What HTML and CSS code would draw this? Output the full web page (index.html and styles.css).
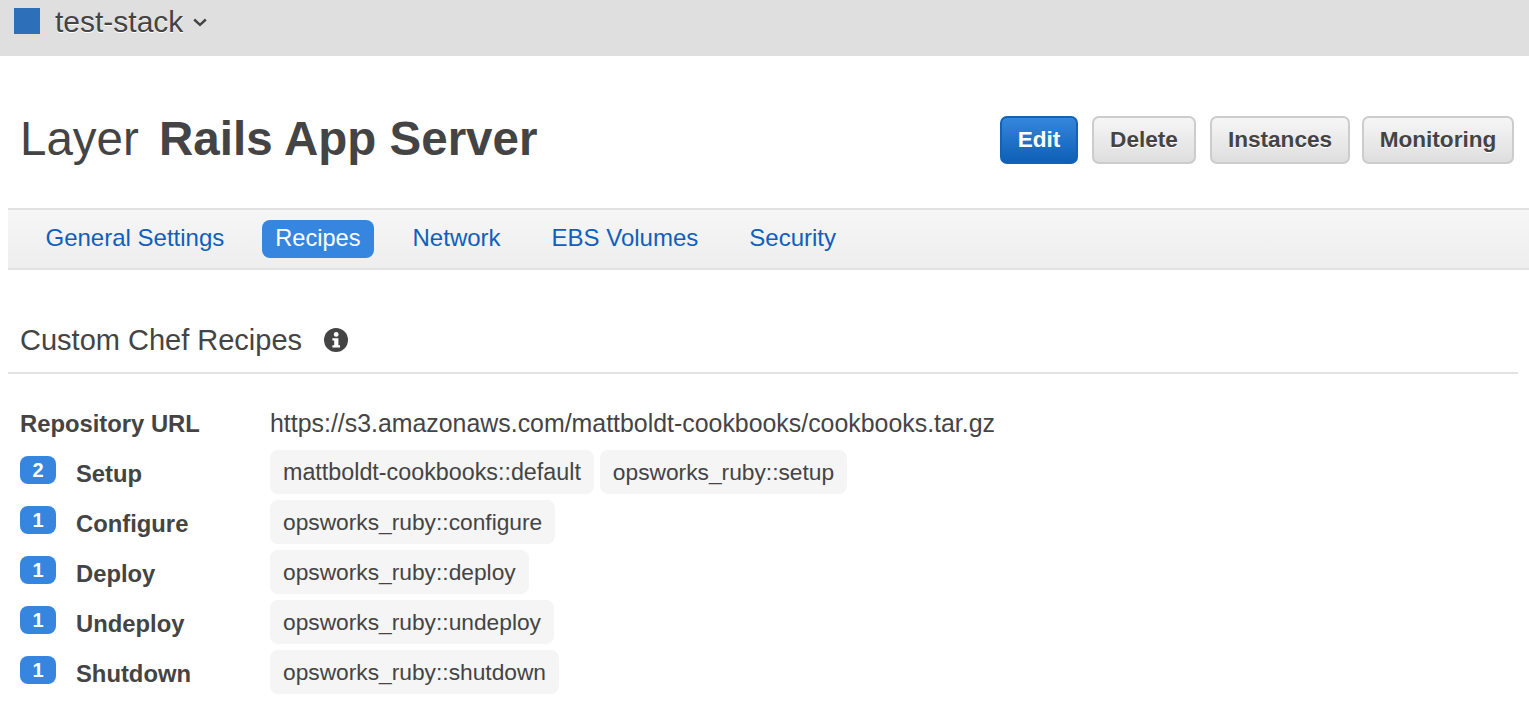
FILE: index.html
```html
<!DOCTYPE html>
<html lang="en">

<head>
    <meta charset="UTF-8">
    <meta name="viewport" content="width=device-width, initial-scale=1.0">
    <title>Layer Rails App Server</title>
    <link rel="stylesheet" href="styles.css">
</head>

<body>
    <div class="stack-bar">
        <span class="stack-color"></span>
        <span class="stack-name">test-stack</span>
        <svg class="stack-caret" width="14" height="9" viewBox="0 0 14 9">
            <path d="M1.2 1.5 L7 6.8 L12.8 1.5" fill="none" stroke="#444" stroke-width="2.4" />
        </svg>
    </div>

    <div class="page-header">
        <h1><span class="light">Layer</span> <strong>Rails App Server</strong></h1>
        <div class="actions">
            <button class="btn btn-primary btn-edit">Edit</button>
            <button class="btn btn-delete">Delete</button>
            <button class="btn btn-instances">Instances</button>
            <button class="btn btn-monitoring">Monitoring</button>
        </div>
    </div>

    <nav class="tabs">
        <a href="#">General Settings</a>
        <a href="#" class="active">Recipes</a>
        <a href="#">Network</a>
        <a href="#">EBS Volumes</a>
        <a href="#">Security</a>
    </nav>

    <div class="section-title">
        <h2>Custom Chef Recipes</h2>
        <svg class="info-icon" width="24" height="24" viewBox="0 0 24 24">
            <circle cx="12" cy="12" r="12" fill="#444" />
            <circle cx="12.2" cy="6.4" r="2.4" fill="#fff" />
            <path d="M8.4 10.2 H14.4 V17.2 H16 V19.6 H8.4 V17.2 H10.2 V12.6 H8.4 Z" fill="#fff" />
        </svg>
    </div>

    <div class="recipes">
        <div class="row row-url">
            <div class="row-label"><b>Repository URL</b></div>
            <div class="url">https://s3.amazonaws.com/mattboldt-cookbooks/cookbooks.tar.gz</div>
        </div>
        <div class="row">
            <div class="row-label"><span class="count">2</span><b>Setup</b></div>
            <div class="chips"><span class="chip chip-long">mattboldt-cookbooks::default</span><span class="chip">opsworks_ruby::setup</span></div>
        </div>
        <div class="row">
            <div class="row-label"><span class="count">1</span><b>Configure</b></div>
            <div class="chips"><span class="chip">opsworks_ruby::configure</span></div>
        </div>
        <div class="row">
            <div class="row-label"><span class="count">1</span><b>Deploy</b></div>
            <div class="chips"><span class="chip">opsworks_ruby::deploy</span></div>
        </div>
        <div class="row">
            <div class="row-label"><span class="count">1</span><b>Undeploy</b></div>
            <div class="chips"><span class="chip">opsworks_ruby::undeploy</span></div>
        </div>
        <div class="row">
            <div class="row-label"><span class="count">1</span><b>Shutdown</b></div>
            <div class="chips"><span class="chip">opsworks_ruby::shutdown</span></div>
        </div>
    </div>
</body>

</html>
```

FILE: styles.css
```css
body {
    margin: 0;
    font-family: "Liberation Sans", Arial, sans-serif;
    color: #444;
    background-color: #fff;
    overflow: hidden;
}

.stack-bar {
    display: flex;
    align-items: center;
    height: 56px;
    padding-left: 14px;
    padding-bottom: 14px;
    box-sizing: border-box;
    background-color: #dfdfdf;
}

.stack-color {
    width: 26px;
    height: 26px;
    margin-right: 15px;
    background-color: #2d6fb8;
}

.stack-name {
    font-size: 30px;
    position: relative;
    top: 1px;
    text-shadow: 0 1px 0 #fff;
}

.stack-caret {
    margin-left: 10px;
    margin-top: 3px;
}

.page-header {
    display: flex;
    justify-content: space-between;
    align-items: center;
    height: 152px;
    padding: 16px 15px 0 20px;
    box-sizing: border-box;
}

h1 {
    margin: -3px 0 0;
    font-size: 47.5px;
    font-weight: normal;
}

h1 .light {
    margin-right: 7px;
}

.actions {
    display: flex;
}

.btn {
    height: 48px;
    padding: 0;
    border: 2px solid #ccc;
    border-radius: 7px;
    font-family: inherit;
    font-size: 22.6px;
    font-weight: bold;
    color: #444;
    text-shadow: 0 1px 0 #fff;
    background: linear-gradient(#f6f6f6, #dedede);
    margin-left: 14px;
}

.btn-primary {
    color: #fff;
    border-color: #0f64b8;
    text-shadow: none;
    background: linear-gradient(#3586dd, #0d60b6);
}

.btn-edit {
    width: 78px;
}

.btn-delete {
    width: 104px;
}

.btn-instances {
    width: 140px;
}

.btn-monitoring {
    width: 152px;
    margin-left: 12px;
}

.tabs {
    display: flex;
    align-items: center;
    height: 62px;
    margin-left: 8px;
    padding-left: 24.5px;
    box-sizing: border-box;
    border-top: 2px solid #e2e2e2;
    border-bottom: 2px solid #e2e2e2;
    background: linear-gradient(#f6f6f6, #eee);
}

.tabs a {
    padding: 0 13px;
    margin-right: 25px;
    height: 38px;
    line-height: 36px;
    font-size: 24px;
    color: #0f5fbd;
    text-decoration: none;
    border-radius: 8px;
}

.tabs a.active {
    color: #fff;
    font-size: 23.6px;
    background-color: #3686df;
    margin-right: 26px;
}

.section-title {
    display: flex;
    align-items: center;
    height: 104px;
    margin: 0 11px 0 8px;
    padding-left: 12px;
    padding-top: 37px;
    box-sizing: border-box;
    border-bottom: 2px solid #e2e2e2;
}

h2 {
    margin: 2px 0 0;
    font-size: 29px;
    font-weight: normal;
}

.info-icon {
    margin-left: 22px;
}

.recipes {
    padding: 25px 0 0 20px;
}

.row {
    display: flex;
    height: 50px;
}

.row-url {
    height: 51px;
    align-items: center;
    padding-bottom: 3px;
    box-sizing: border-box;
}

.row-label {
    display: flex;
    width: 250px;
    font-size: 23.8px;
    align-items: center;
}

.row-label b {
    position: relative;
    top: 1px;
}

.row:not(.row-url) .row-label b {
    top: 2px;
}

.row .count {
    width: 36px;
    height: 28px;
    line-height: 29px;
    margin-right: 20px;
    margin-top: -5px;
    border-radius: 8px;
    font-size: 20px;
    font-weight: bold;
    text-align: center;
    color: #fff;
    background-color: #3686df;
}

.row:not(.row-url) .row-label {
    height: 44px;
}

.url {
    font-size: 24.9px;
}

.chips {
    display: flex;
    gap: 6px;
}

.chip {
    height: 44px;
    line-height: 44px;
    padding: 0 13px;
    border-radius: 8px;
    font-size: 22.75px;
    background-color: #f5f5f5;
}

.chip-long {
    font-size: 23.3px;
}
```
